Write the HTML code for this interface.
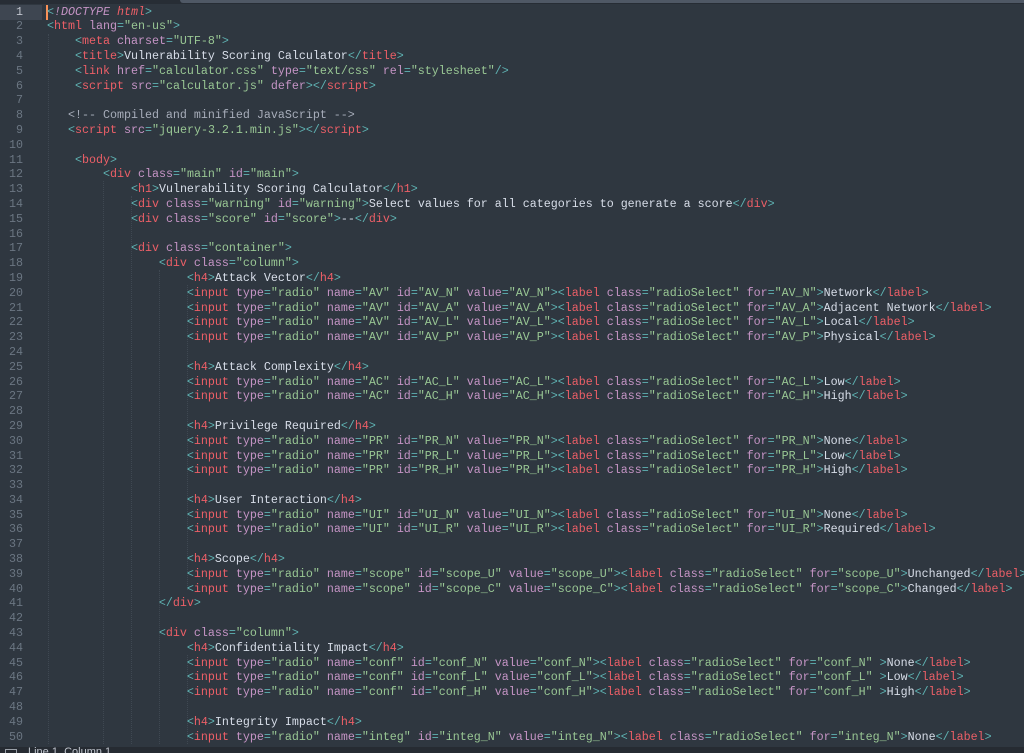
<!DOCTYPE html>
<html><head><meta charset="utf-8">
<style>
html,body{margin:0;padding:0;}
body{width:1024px;height:753px;overflow:hidden;background:#2f3740;position:relative;font-family:"Liberation Mono","DejaVu Sans Mono",monospace;}
#top{position:absolute;left:0;top:0;width:1024px;height:4px;background:#272d35;}
#top2{position:absolute;left:180px;top:0;right:0;height:3px;background:#4f5865;border-radius:0 0 0 3px;}
#hl{position:absolute;left:0;top:5px;width:42px;height:15px;background:#3e4651;}
#cur{position:absolute;left:46px;top:5px;width:2px;height:15px;background:#f99157;}
#gut{position:absolute;left:0;top:4.6px;width:23px;text-align:right;font-size:11.67px;line-height:14.8px;color:#6b7682;}
#gut div{height:14.8px;}
#gut div:first-child{color:#c0c5ce;}
#code{position:absolute;left:47px;top:4.6px;font-size:11.67px;line-height:14.8px;color:#d8dee9;white-space:normal;}
#code div{height:14.8px;white-space:pre;}
g{color:#5fb3b3}r{color:#ec5f67}m{color:#c594c5}v{color:#99c794}c{color:#a7adba}
.i{font-style:italic}
#status{position:absolute;left:0;top:747px;width:1024px;height:6px;background:#262b32;overflow:hidden;}
#status span{position:absolute;left:28px;top:-1px;font-family:"Liberation Sans",sans-serif;font-size:11px;color:#c0c5ce;}
#status i{position:absolute;left:5px;top:2px;width:10px;height:8px;border:1px solid #9aa0a8;}
.guide{position:absolute;width:0;border-left:1px dotted #3f4852;}
</style></head><body>
<div id="top"></div><div id="top2"></div>
<div id="hl"></div><div id="cur"></div>
<div class="guide" style="left:48px;top:34px;height:710px"></div>
<div class="guide" style="left:103px;top:181px;height:563px"></div>
<div class="guide" style="left:131px;top:196px;height:548px"></div>
<div class="guide" style="left:159px;top:270px;height:474px"></div>
<div class="guide" style="left:187px;top:285px;height:305px"></div>
<div class="guide" style="left:187px;top:655px;height:89px"></div>
<div id="gut"><div>1</div><div>2</div><div>3</div><div>4</div><div>5</div><div>6</div><div>7</div><div>8</div><div>9</div><div>10</div><div>11</div><div>12</div><div>13</div><div>14</div><div>15</div><div>16</div><div>17</div><div>18</div><div>19</div><div>20</div><div>21</div><div>22</div><div>23</div><div>24</div><div>25</div><div>26</div><div>27</div><div>28</div><div>29</div><div>30</div><div>31</div><div>32</div><div>33</div><div>34</div><div>35</div><div>36</div><div>37</div><div>38</div><div>39</div><div>40</div><div>41</div><div>42</div><div>43</div><div>44</div><div>45</div><div>46</div><div>47</div><div>48</div><div>49</div><div>50</div></div>
<div id="code">
<div><g>&lt;</g><m class="i">!DOCTYPE</m> <r class="i">html</r><g>&gt;</g></div>
<div><g>&lt;</g><r>html</r> <m>lang</m><g>=</g><v>"en-us"</v><g>&gt;</g></div>
<div>    <g>&lt;</g><r>meta</r> <m>charset</m><g>=</g><v>"UTF-8"</v><g>&gt;</g></div>
<div>    <g>&lt;</g><r>title</r><g>&gt;</g>Vulnerability Scoring Calculator<g>&lt;/</g><r>title</r><g>&gt;</g></div>
<div>    <g>&lt;</g><r>link</r> <m>href</m><g>=</g><v>"calculator.css"</v> <m>type</m><g>=</g><v>"text/css"</v> <m>rel</m><g>=</g><v>"stylesheet"</v><g>/&gt;</g></div>
<div>    <g>&lt;</g><r>script</r> <m>src</m><g>=</g><v>"calculator.js"</v> <m>defer</m><g>&gt;&lt;/</g><r>script</r><g>&gt;</g></div>
<div></div>
<div>   <c>&lt;!-- Compiled and minified JavaScript --&gt;</c></div>
<div>   <g>&lt;</g><r>script</r> <m>src</m><g>=</g><v>"jquery-3.2.1.min.js"</v><g>&gt;&lt;/</g><r>script</r><g>&gt;</g></div>
<div></div>
<div>    <g>&lt;</g><r>body</r><g>&gt;</g></div>
<div>        <g>&lt;</g><r>div</r> <m>class</m><g>=</g><v>"main"</v> <m>id</m><g>=</g><v>"main"</v><g>&gt;</g></div>
<div>            <g>&lt;</g><r>h1</r><g>&gt;</g>Vulnerability Scoring Calculator<g>&lt;/</g><r>h1</r><g>&gt;</g></div>
<div>            <g>&lt;</g><r>div</r> <m>class</m><g>=</g><v>"warning"</v> <m>id</m><g>=</g><v>"warning"</v><g>&gt;</g>Select values for all categories to generate a score<g>&lt;/</g><r>div</r><g>&gt;</g></div>
<div>            <g>&lt;</g><r>div</r> <m>class</m><g>=</g><v>"score"</v> <m>id</m><g>=</g><v>"score"</v><g>&gt;</g>--<g>&lt;/</g><r>div</r><g>&gt;</g></div>
<div></div>
<div>            <g>&lt;</g><r>div</r> <m>class</m><g>=</g><v>"container"</v><g>&gt;</g></div>
<div>                <g>&lt;</g><r>div</r> <m>class</m><g>=</g><v>"column"</v><g>&gt;</g></div>
<div>                    <g>&lt;</g><r>h4</r><g>&gt;</g>Attack Vector<g>&lt;/</g><r>h4</r><g>&gt;</g></div>
<div>                    <g>&lt;</g><r>input</r> <m>type</m><g>=</g><v>"radio"</v> <m>name</m><g>=</g><v>"AV"</v> <m>id</m><g>=</g><v>"AV_N"</v> <m>value</m><g>=</g><v>"AV_N"</v><g>&gt;&lt;</g><r>label</r> <m>class</m><g>=</g><v>"radioSelect"</v> <m>for</m><g>=</g><v>"AV_N"</v><g>&gt;</g>Network<g>&lt;/</g><r>label</r><g>&gt;</g></div>
<div>                    <g>&lt;</g><r>input</r> <m>type</m><g>=</g><v>"radio"</v> <m>name</m><g>=</g><v>"AV"</v> <m>id</m><g>=</g><v>"AV_A"</v> <m>value</m><g>=</g><v>"AV_A"</v><g>&gt;&lt;</g><r>label</r> <m>class</m><g>=</g><v>"radioSelect"</v> <m>for</m><g>=</g><v>"AV_A"</v><g>&gt;</g>Adjacent Network<g>&lt;/</g><r>label</r><g>&gt;</g></div>
<div>                    <g>&lt;</g><r>input</r> <m>type</m><g>=</g><v>"radio"</v> <m>name</m><g>=</g><v>"AV"</v> <m>id</m><g>=</g><v>"AV_L"</v> <m>value</m><g>=</g><v>"AV_L"</v><g>&gt;&lt;</g><r>label</r> <m>class</m><g>=</g><v>"radioSelect"</v> <m>for</m><g>=</g><v>"AV_L"</v><g>&gt;</g>Local<g>&lt;/</g><r>label</r><g>&gt;</g></div>
<div>                    <g>&lt;</g><r>input</r> <m>type</m><g>=</g><v>"radio"</v> <m>name</m><g>=</g><v>"AV"</v> <m>id</m><g>=</g><v>"AV_P"</v> <m>value</m><g>=</g><v>"AV_P"</v><g>&gt;&lt;</g><r>label</r> <m>class</m><g>=</g><v>"radioSelect"</v> <m>for</m><g>=</g><v>"AV_P"</v><g>&gt;</g>Physical<g>&lt;/</g><r>label</r><g>&gt;</g></div>
<div></div>
<div>                    <g>&lt;</g><r>h4</r><g>&gt;</g>Attack Complexity<g>&lt;/</g><r>h4</r><g>&gt;</g></div>
<div>                    <g>&lt;</g><r>input</r> <m>type</m><g>=</g><v>"radio"</v> <m>name</m><g>=</g><v>"AC"</v> <m>id</m><g>=</g><v>"AC_L"</v> <m>value</m><g>=</g><v>"AC_L"</v><g>&gt;&lt;</g><r>label</r> <m>class</m><g>=</g><v>"radioSelect"</v> <m>for</m><g>=</g><v>"AC_L"</v><g>&gt;</g>Low<g>&lt;/</g><r>label</r><g>&gt;</g></div>
<div>                    <g>&lt;</g><r>input</r> <m>type</m><g>=</g><v>"radio"</v> <m>name</m><g>=</g><v>"AC"</v> <m>id</m><g>=</g><v>"AC_H"</v> <m>value</m><g>=</g><v>"AC_H"</v><g>&gt;&lt;</g><r>label</r> <m>class</m><g>=</g><v>"radioSelect"</v> <m>for</m><g>=</g><v>"AC_H"</v><g>&gt;</g>High<g>&lt;/</g><r>label</r><g>&gt;</g></div>
<div></div>
<div>                    <g>&lt;</g><r>h4</r><g>&gt;</g>Privilege Required<g>&lt;/</g><r>h4</r><g>&gt;</g></div>
<div>                    <g>&lt;</g><r>input</r> <m>type</m><g>=</g><v>"radio"</v> <m>name</m><g>=</g><v>"PR"</v> <m>id</m><g>=</g><v>"PR_N"</v> <m>value</m><g>=</g><v>"PR_N"</v><g>&gt;&lt;</g><r>label</r> <m>class</m><g>=</g><v>"radioSelect"</v> <m>for</m><g>=</g><v>"PR_N"</v><g>&gt;</g>None<g>&lt;/</g><r>label</r><g>&gt;</g></div>
<div>                    <g>&lt;</g><r>input</r> <m>type</m><g>=</g><v>"radio"</v> <m>name</m><g>=</g><v>"PR"</v> <m>id</m><g>=</g><v>"PR_L"</v> <m>value</m><g>=</g><v>"PR_L"</v><g>&gt;&lt;</g><r>label</r> <m>class</m><g>=</g><v>"radioSelect"</v> <m>for</m><g>=</g><v>"PR_L"</v><g>&gt;</g>Low<g>&lt;/</g><r>label</r><g>&gt;</g></div>
<div>                    <g>&lt;</g><r>input</r> <m>type</m><g>=</g><v>"radio"</v> <m>name</m><g>=</g><v>"PR"</v> <m>id</m><g>=</g><v>"PR_H"</v> <m>value</m><g>=</g><v>"PR_H"</v><g>&gt;&lt;</g><r>label</r> <m>class</m><g>=</g><v>"radioSelect"</v> <m>for</m><g>=</g><v>"PR_H"</v><g>&gt;</g>High<g>&lt;/</g><r>label</r><g>&gt;</g></div>
<div></div>
<div>                    <g>&lt;</g><r>h4</r><g>&gt;</g>User Interaction<g>&lt;/</g><r>h4</r><g>&gt;</g></div>
<div>                    <g>&lt;</g><r>input</r> <m>type</m><g>=</g><v>"radio"</v> <m>name</m><g>=</g><v>"UI"</v> <m>id</m><g>=</g><v>"UI_N"</v> <m>value</m><g>=</g><v>"UI_N"</v><g>&gt;&lt;</g><r>label</r> <m>class</m><g>=</g><v>"radioSelect"</v> <m>for</m><g>=</g><v>"UI_N"</v><g>&gt;</g>None<g>&lt;/</g><r>label</r><g>&gt;</g></div>
<div>                    <g>&lt;</g><r>input</r> <m>type</m><g>=</g><v>"radio"</v> <m>name</m><g>=</g><v>"UI"</v> <m>id</m><g>=</g><v>"UI_R"</v> <m>value</m><g>=</g><v>"UI_R"</v><g>&gt;&lt;</g><r>label</r> <m>class</m><g>=</g><v>"radioSelect"</v> <m>for</m><g>=</g><v>"UI_R"</v><g>&gt;</g>Required<g>&lt;/</g><r>label</r><g>&gt;</g></div>
<div></div>
<div>                    <g>&lt;</g><r>h4</r><g>&gt;</g>Scope<g>&lt;/</g><r>h4</r><g>&gt;</g></div>
<div>                    <g>&lt;</g><r>input</r> <m>type</m><g>=</g><v>"radio"</v> <m>name</m><g>=</g><v>"scope"</v> <m>id</m><g>=</g><v>"scope_U"</v> <m>value</m><g>=</g><v>"scope_U"</v><g>&gt;&lt;</g><r>label</r> <m>class</m><g>=</g><v>"radioSelect"</v> <m>for</m><g>=</g><v>"scope_U"</v><g>&gt;</g>Unchanged<g>&lt;/</g><r>label</r><g>&gt;</g></div>
<div>                    <g>&lt;</g><r>input</r> <m>type</m><g>=</g><v>"radio"</v> <m>name</m><g>=</g><v>"scope"</v> <m>id</m><g>=</g><v>"scope_C"</v> <m>value</m><g>=</g><v>"scope_C"</v><g>&gt;&lt;</g><r>label</r> <m>class</m><g>=</g><v>"radioSelect"</v> <m>for</m><g>=</g><v>"scope_C"</v><g>&gt;</g>Changed<g>&lt;/</g><r>label</r><g>&gt;</g></div>
<div>                <g>&lt;/</g><r>div</r><g>&gt;</g></div>
<div></div>
<div>                <g>&lt;</g><r>div</r> <m>class</m><g>=</g><v>"column"</v><g>&gt;</g></div>
<div>                    <g>&lt;</g><r>h4</r><g>&gt;</g>Confidentiality Impact<g>&lt;/</g><r>h4</r><g>&gt;</g></div>
<div>                    <g>&lt;</g><r>input</r> <m>type</m><g>=</g><v>"radio"</v> <m>name</m><g>=</g><v>"conf"</v> <m>id</m><g>=</g><v>"conf_N"</v> <m>value</m><g>=</g><v>"conf_N"</v><g>&gt;&lt;</g><r>label</r> <m>class</m><g>=</g><v>"radioSelect"</v> <m>for</m><g>=</g><v>"conf_N"</v> <g>&gt;</g>None<g>&lt;/</g><r>label</r><g>&gt;</g></div>
<div>                    <g>&lt;</g><r>input</r> <m>type</m><g>=</g><v>"radio"</v> <m>name</m><g>=</g><v>"conf"</v> <m>id</m><g>=</g><v>"conf_L"</v> <m>value</m><g>=</g><v>"conf_L"</v><g>&gt;&lt;</g><r>label</r> <m>class</m><g>=</g><v>"radioSelect"</v> <m>for</m><g>=</g><v>"conf_L"</v> <g>&gt;</g>Low<g>&lt;/</g><r>label</r><g>&gt;</g></div>
<div>                    <g>&lt;</g><r>input</r> <m>type</m><g>=</g><v>"radio"</v> <m>name</m><g>=</g><v>"conf"</v> <m>id</m><g>=</g><v>"conf_H"</v> <m>value</m><g>=</g><v>"conf_H"</v><g>&gt;&lt;</g><r>label</r> <m>class</m><g>=</g><v>"radioSelect"</v> <m>for</m><g>=</g><v>"conf_H"</v> <g>&gt;</g>High<g>&lt;/</g><r>label</r><g>&gt;</g></div>
<div></div>
<div>                    <g>&lt;</g><r>h4</r><g>&gt;</g>Integrity Impact<g>&lt;/</g><r>h4</r><g>&gt;</g></div>
<div>                    <g>&lt;</g><r>input</r> <m>type</m><g>=</g><v>"radio"</v> <m>name</m><g>=</g><v>"integ"</v> <m>id</m><g>=</g><v>"integ_N"</v> <m>value</m><g>=</g><v>"integ_N"</v><g>&gt;&lt;</g><r>label</r> <m>class</m><g>=</g><v>"radioSelect"</v> <m>for</m><g>=</g><v>"integ_N"</v><g>&gt;</g>None<g>&lt;/</g><r>label</r><g>&gt;</g></div>
</div>
<div id="status"><i></i><span>Line 1, Column 1</span></div>
</body></html>
